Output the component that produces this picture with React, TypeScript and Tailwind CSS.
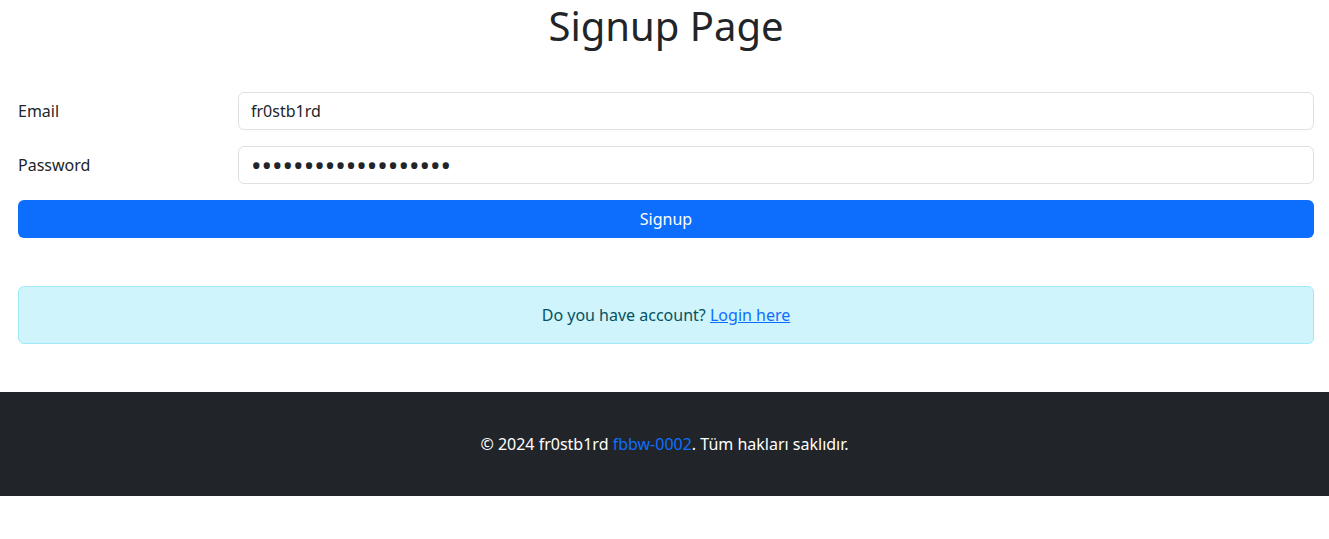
import { useState } from 'react';

const font = { fontFamily: '"Noto Sans", "Open Sans", sans-serif' };

export default function App() {
    const [email, setEmail] = useState('fr0stb1rd');
    const [password, setPassword] = useState('fr0stb1rdfr0stb1rd1');

    return (
        <div className="min-h-[539px] bg-white text-[16px] text-[#212529]" style={font}>
            <main className="pr-[15px] pl-[18px]">
                <h1 className="pt-[2px] text-center text-[40px] leading-[48px] font-normal">
                    Signup Page
                </h1>

                <form
                    className="mt-[42px] flex flex-col gap-4"
                    onSubmit={(e) => e.preventDefault()}
                >
                    <div className="flex items-center">
                        <label htmlFor="email" className="w-[220px] shrink-0">
                            Email
                        </label>
                        <input
                            id="email"
                            type="text"
                            value={email}
                            onChange={(e) => setEmail(e.target.value)}
                            className="h-[38px] flex-1 rounded-[6px] border border-[#dee2e6] bg-white px-3 text-[16px] text-[#212529] outline-none"
                        />
                    </div>
                    <div className="flex items-center">
                        <label htmlFor="password" className="w-[220px] shrink-0">
                            Password
                        </label>
                        <input
                            id="password"
                            type="password"
                            value={password}
                            onChange={(e) => setPassword(e.target.value)}
                            className="h-[38px] flex-1 rounded-[6px] border border-[#dee2e6] bg-white px-3 text-[28px] text-[#212529] outline-none"
                        />
                    </div>
                    <button
                        type="submit"
                        className="h-[38px] w-full rounded-[6px] bg-[#0d6efd] text-[16px] text-white"
                    >
                        Signup
                    </button>
                </form>

                <div className="mt-12 flex h-[58px] items-center justify-center rounded-[6px] border border-[#9eeaf9] bg-[#cff4fc] text-[#055160]">
                    <p>
                        Do you have account?{' '}
                        <a href="#" className="text-[#0d6efd] underline">
                            Login here
                        </a>
                    </p>
                </div>
            </main>

            <footer className="mt-12 bg-[#212529] py-10 text-center leading-6 text-white">
                © 2024 fr0stb1rd{' '}
                <a href="#" className="text-[#0d6efd]">
                    fbbw-0002
                </a>
                . Tüm hakları saklıdır.
            </footer>
        </div>
    );
}
